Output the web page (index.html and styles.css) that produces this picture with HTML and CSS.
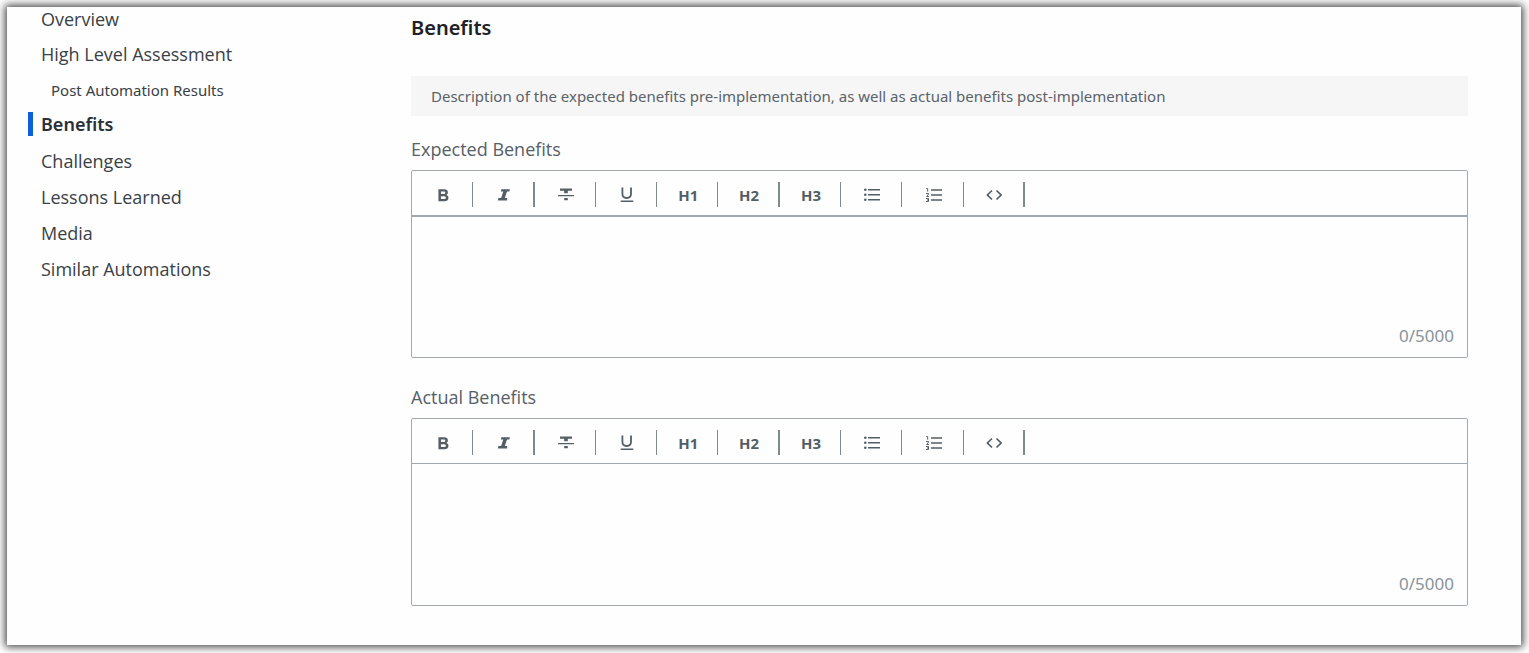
FILE: index.html
```html
<!DOCTYPE html>
<html lang="en">
<head>
<meta charset="utf-8">
<meta name="viewport" content="width=device-width, initial-scale=1">
<title>Benefits</title>
<link rel="stylesheet" href="styles.css">
</head>
<body>
<svg class="sprite" aria-hidden="true">
  <symbol id="bold" viewBox="1 1 14 14"><path fill-rule="evenodd" d="M4 3h5c2 0 3.300 1 3.300 2.800 0 1.100-.6 1.800-1.400 2.200 1.200.3 1.900 1.200 1.900 2.400 0 2-1.500 3.100-3.600 3.100H4zM6.200 4.900v2.200h2.500c.8 0 1.300-.4 1.300-1.100s-.5-1.100-1.300-1.100zM6.200 9v2.600H9c.9 0 1.500-.5 1.500-1.300S9.900 9 9 9z"/></symbol>
  <symbol id="italic" viewBox="1 1 15 15"><path d="M6 3h8l-.4 2.200h-2.300l-2 6.200h2.300l-.4 2.200H2.800l.4-2.200h2.600l2-6.200H5.600z"/></symbol>
  <symbol id="strike" viewBox="0 0 16 16"><path d="M2 1.500h12v2.200H9.800v2.500H6.200V3.700H2zM0 8h16v1.300H0zM6.200 11h3.600v2.300H6.200z"/></symbol>
  <symbol id="underline" viewBox="0 0 16 16"><path fill="none" stroke="currentColor" stroke-width="1.800" d="M3.400.6v6.200c0 2.800 1.700 4.200 4.300 4.200S12 9.600 12 6.800V.6"/><path d="M1.700 13.500h12.600V15H1.700z"/></symbol>
  <symbol id="bullets" viewBox="0 0 16 16"><path d="M4 2h12v1.600H4zM4 7h12v1.600H4zM4 12h12v1.600H4z"/><circle cx="1.300" cy="2.800" r="1.300"/><circle cx="1.300" cy="7.800" r="1.300"/><circle cx="1.300" cy="12.800" r="1.300"/></symbol>
  <symbol id="numbers" viewBox="0 0 16 16"><path d="M5 2.200h11v1.600H5zM5 7.200h11v1.600H5zM5 12.200h11v1.600H5z"/><path fill="none" stroke="currentColor" d="M.3 1.500h1.400v3.200M0 6.500h2.500v.7L.6 9.500h2.200M0 11.500h2.500v3H0M.8 13h1.700"/></symbol>
  <symbol id="code" viewBox="0 0 16 16"><path fill="none" stroke="currentColor" stroke-width="1.700" d="M6 3.500 1.400 8 6 12.500M10.500 3.500 15.100 8l-4.600 4.500"/></symbol>
</svg>
<div class="panel">
  <nav class="sidebar" aria-label="Sections">
    <ul class="nav-list">
      <li><a class="nav-link" href="#overview">Overview</a></li>
      <li><a class="nav-link" href="#assessment">High Level Assessment</a></li>
      <li class="nav-child"><a class="nav-link" href="#results">Post Automation Results</a></li>
      <li class="nav-current"><a class="nav-link" href="#benefits" aria-current="true">Benefits</a></li>
      <li><a class="nav-link" href="#challenges">Challenges</a></li>
      <li><a class="nav-link" href="#lessons">Lessons Learned</a></li>
      <li><a class="nav-link" href="#media">Media</a></li>
      <li><a class="nav-link" href="#similar">Similar Automations</a></li>
    </ul>
  </nav>
  <main class="content" id="benefits">
    <h1 class="title">Benefits</h1>
    <p class="note">Description of the expected benefits pre-implementation, as well as actual benefits post-implementation</p>
    <section class="field">
      <label class="label" for="expected">Expected Benefits</label>
      <div class="editor editor-active">
        <div class="toolbar">
          <button class="tool" type="button" aria-label="Bold"><svg class="icon"><use href="#bold"/></svg></button>
          <button class="tool tool-wide" type="button" aria-label="Italic"><svg class="icon"><use href="#italic"/></svg></button>
          <button class="tool" type="button" aria-label="Strikethrough"><svg class="icon"><use href="#strike"/></svg></button>
          <button class="tool" type="button" aria-label="Underline"><svg class="icon"><use href="#underline"/></svg></button>
          <button class="tool" type="button">H1</button>
          <button class="tool tool-wide" type="button">H2</button>
          <button class="tool" type="button">H3</button>
          <button class="tool" type="button" aria-label="Bulleted list"><svg class="icon"><use href="#bullets"/></svg></button>
          <button class="tool" type="button" aria-label="Numbered list"><svg class="icon"><use href="#numbers"/></svg></button>
          <button class="tool tool-wide" type="button" aria-label="Code"><svg class="icon"><use href="#code"/></svg></button>
        </div>
        <textarea class="text" id="expected" maxlength="5000"></textarea>
        <div class="counter">0/5000</div>
      </div>
    </section>
    <section class="field">
      <label class="label" for="actual">Actual Benefits</label>
      <div class="editor">
        <div class="toolbar">
          <button class="tool" type="button" aria-label="Bold"><svg class="icon"><use href="#bold"/></svg></button>
          <button class="tool tool-wide" type="button" aria-label="Italic"><svg class="icon"><use href="#italic"/></svg></button>
          <button class="tool" type="button" aria-label="Strikethrough"><svg class="icon"><use href="#strike"/></svg></button>
          <button class="tool" type="button" aria-label="Underline"><svg class="icon"><use href="#underline"/></svg></button>
          <button class="tool" type="button">H1</button>
          <button class="tool tool-wide" type="button">H2</button>
          <button class="tool" type="button">H3</button>
          <button class="tool" type="button" aria-label="Bulleted list"><svg class="icon"><use href="#bullets"/></svg></button>
          <button class="tool" type="button" aria-label="Numbered list"><svg class="icon"><use href="#numbers"/></svg></button>
          <button class="tool tool-wide" type="button" aria-label="Code"><svg class="icon"><use href="#code"/></svg></button>
        </div>
        <textarea class="text" id="actual" maxlength="5000"></textarea>
        <div class="counter">0/5000</div>
      </div>
    </section>
  </main>
</div>
</body>
</html>
```
FILE: styles.css
```css
* { box-sizing: border-box; }

body {
  margin: 0;
  padding: 7px 8px 8px 7px;
  background: #fff;
  color: #394147;
  font-family: "Noto Sans", sans-serif;
}

.sprite { display: none; }

.panel {
  display: grid;
  grid-template-columns: 383px minmax(0, 1fr);
  padding: 0 53px 39px 21px;
  background: #fefefe;
  box-shadow: 0 0 8px 2px #444;
}

.nav-list {
  margin: 0;
  padding: 0;
  list-style: none;
}

.nav-list li {
  display: flex;
  align-items: center;
  height: 36px;
  padding-left: 8px;
  border-left: 5px solid transparent;
  font-family: "Open Sans", "Noto Sans", sans-serif;
  font-size: 18px;
  line-height: 24px;
}

.nav-list li:first-child { height: 29px; padding-bottom: 5px; }

.nav-list .nav-child {
  height: 35px;
  padding-left: 18px;
  font-family: "Noto Sans", sans-serif;
  font-size: 15px;
}

.nav-list .nav-current {
  height: 24px;
  margin: 5px 0 7px;
  border-left-color: #0b61d8;
  color: #2a3035;
  font-family: "Noto Sans", sans-serif;
  font-weight: 600;
}

.nav-link { color: inherit; text-decoration: none; }

.title {
  margin: 7px 0 35px;
  color: #1d2226;
  font-size: 20px;
  font-weight: 600;
  line-height: 27px;
}

.note {
  margin: 0;
  padding: 8px 20px;
  background: #f6f6f6;
  color: #5b6268;
  font-size: 15px;
  line-height: 24px;
}

.field { margin-top: 20px; }
.field + .field { margin-top: 26px; }

.label {
  display: block;
  margin-bottom: 8px;
  color: #566068;
  font-family: "Open Sans", "Noto Sans", sans-serif;
  font-size: 18px;
  line-height: 26px;
}

.editor {
  border: 1px solid #a1abaf;
  border-radius: 2px;
}

.toolbar {
  display: grid;
  grid-template-columns: repeat(10, minmax(0, 1fr));
  align-items: center;
  height: 45px;
  padding: 3px calc(100% - 613px) 0 0;
  border-bottom: 1px solid #a1abaf;
}

.editor-active .toolbar { height: 46px; border-bottom-width: 2px; }

.tool {
  display: grid;
  place-items: center;
  height: 25px;
  padding: 0 0 0 2px;
  border: 0;
  border-right: 1px solid #7f898e;
  background: none;
  color: #535e65;
  font: bold 15px/20px "Noto Sans", sans-serif;
}

.tool-wide { border-right-width: 2px; }

.icon {
  width: 16px;
  height: 16px;
  fill: currentColor;
}

.text {
  display: block;
  width: 100%;
  height: 105px;
  padding: 8px 12px;
  border: 0;
  outline: 0;
  resize: none;
  background: none;
  color: inherit;
  font: 17px/24px "Noto Sans", sans-serif;
}

.editor-active .text { height: 104px; }

.counter {
  padding: 3px 13px 9px;
  color: #87949a;
  font-size: 17px;
  line-height: 24px;
  text-align: right;
}
```
